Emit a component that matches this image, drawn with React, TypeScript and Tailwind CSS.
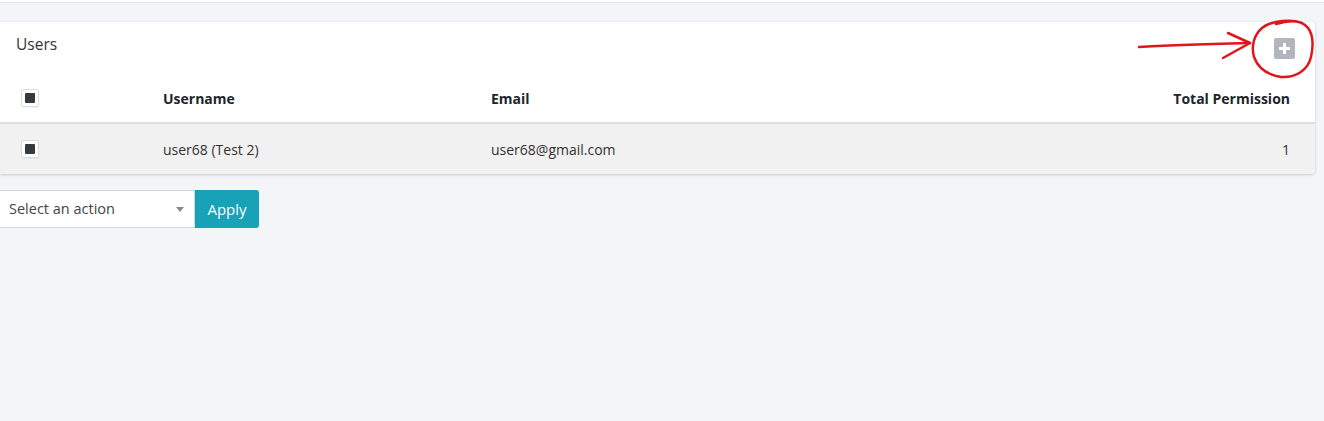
function Check() {
  return (
    <div className="w-[18px] h-[18px] bg-white border border-[#dcdcdc] rounded-[2px] flex items-center justify-center shadow-[0_1px_1px_rgba(0,0,0,0.05)]">
      <div className="w-[10px] h-[10px] bg-[#343a40] rounded-[1px]" />
    </div>
  );
}

function Annotation() {
  // hand-drawn red arrow and circle around the add button
  return (
    <svg className="absolute left-[1120px] top-[14px] pointer-events-none" width="204" height="70" viewBox="1120 14 204 70" fill="none" stroke="#e0161b" strokeWidth="2.5" strokeLinecap="round" strokeLinejoin="round">
      <path d="M1139 47 C1170 45 1210 44 1250 43" />
      <path d="M1228 33 L1250 43 L1223 58" />
      <path d="M1302 23 C1292 19 1272 20 1262 28 C1254 35 1251 46 1254 57 C1258 68 1268 75 1281 77 C1296 78 1308 70 1311 57 C1314 44 1313 31 1305 25 C1298 20 1286 21 1276 24" />
    </svg>
  );
}

export default function App() {
  return (
    <div className="relative w-[1324px] h-[421px] bg-[#f4f5f9] overflow-hidden" style={{ fontFamily: '"Open Sans", Lato, sans-serif' }}>
      <div className="h-[3px] bg-white border-b border-[#e3e4e8]" />

      <div className="pt-[19px] pr-[9px]">
        <div className="bg-white rounded-r-[4px] shadow-[0_1px_3px_rgba(0,0,0,0.18)] overflow-hidden">
          <div className="h-[44px] flex items-center justify-between pl-[16px] pr-[20px]">
            <span className="text-[15.5px] text-[#333] pt-[2px]">Users</span>
            <button className="w-[21px] h-[21px] mt-[16px] self-start bg-[#b1b5bc] rounded-[2px] flex items-center justify-center">
              <svg width="13" height="13" viewBox="0 0 13 13">
                <rect x="5" y="1" width="3" height="11" fill="white" />
                <rect x="1" y="5" width="11" height="3" fill="white" />
              </svg>
            </button>
          </div>

          <div className="grid grid-cols-[147px_328px_1fr_auto] items-center h-[58px] pt-[8px] text-[14px] font-bold text-[#212529] border-b-2 border-[#dedede]">
            <div className="pl-[21px]"><Check /></div>
            <div className="pl-[16px]">Username</div>
            <div className="pl-[16px]">Email</div>
            <div className="pr-[25px] text-right">Total Permission</div>
          </div>

          <div className="grid grid-cols-[147px_328px_1fr_auto] items-center h-[50px] bg-[#f1f1f1] text-[14px] text-[#333]">
            <div className="pl-[21px]"><Check /></div>
            <div className="pl-[16px]">user68 (Test 2)</div>
            <div className="pl-[16px]">user68@gmail.com</div>
            <div className="pr-[25px] text-right">1</div>
          </div>
        </div>
      </div>

      <div className="mt-[16px] flex">
        <div className="w-[195px] h-[38px] bg-white border border-l-0 border-[#d2d6de] flex items-center justify-between pl-[9px] pr-[10px] text-[14.5px] text-[#444]">
          <span>Select an action</span>
          <span className="w-0 h-0 border-l-[4px] border-r-[4px] border-t-[5px] border-l-transparent border-r-transparent border-t-[#888]" />
        </div>
        <button className="w-[64px] h-[38px] bg-[#17a2b8] text-white text-[15px] rounded-r-[3px]">Apply</button>
      </div>

      <Annotation />
    </div>
  );
}
